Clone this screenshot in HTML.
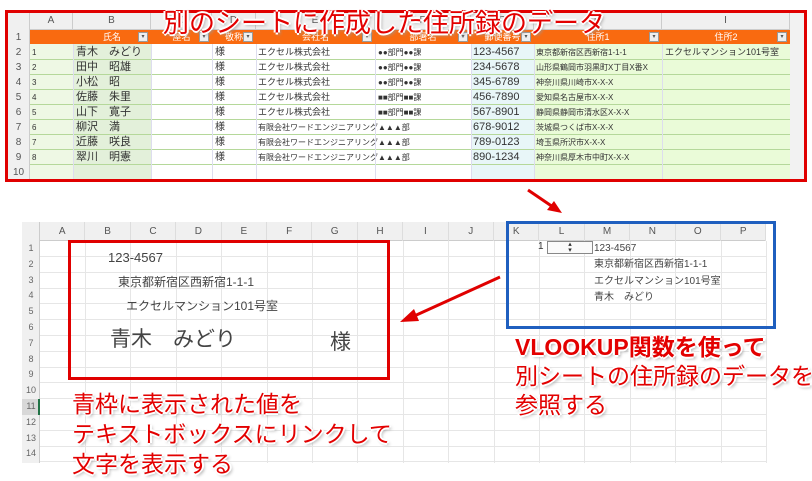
<!DOCTYPE html>
<html><head><meta charset="utf-8"><style>
*{margin:0;padding:0;box-sizing:border-box}
body{width:812px;height:481px;background:#fff;position:relative;overflow:hidden;font-family:"Liberation Sans","Noto Sans CJK JP",sans-serif;color:#333}
.a{position:absolute;white-space:nowrap}
.red{color:#e30000;font-weight:bold;text-shadow:-2px 0 #fff,2px 0 #fff,0 -2px #fff,0 2px #fff,2px 2px 3px #999}
</style></head><body>

<div class="a" style="left:5px;top:10px;width:802px;height:172px;background:#f2f2f2"></div>
<div class="a" style="left:30px;top:12px;width:760px;height:18px;background:#f0f0f0;border-bottom:1px solid #ccc"></div>
<div class="a" style="left:7px;top:12px;width:23px;height:168px;background:#f0f0f0;border-right:1px solid #ccc"></div>
<div class="a" style="left:30px;top:30px;width:760px;height:150px;background:#fff"></div>
<div class="a" style="left:30px;top:44px;width:43px;height:136px;background:#eef8e4"></div>
<div class="a" style="left:73px;top:44px;width:78px;height:136px;background:#e3f0da"></div>
<div class="a" style="left:471px;top:44px;width:63px;height:136px;background:#e8f6f8"></div>
<div class="a" style="left:534px;top:44px;width:256px;height:136px;background:#eafbd8"></div>
<div class="a" style="left:30px;top:30px;width:760px;height:14px;background:#f96a10"></div>
<div id="top"></div>
<div class="a" style="left:5px;top:10px;width:802px;height:172px;border:3px solid #e00000"></div>

<div class="a" style="left:22px;top:222px;width:744px;height:19px;background:#f0f0f0;border-bottom:1px solid #ccc"></div>
<div class="a" style="left:22px;top:222px;width:18px;height:241px;background:#f0f0f0;border-right:1px solid #ccc"></div>
<div class="a" style="left:22px;top:399px;width:18px;height:16px;background:#d8d8d8;border-right:2px solid #217346"></div>
<div id="bot"></div>

<div class="a" style="left:68px;top:240px;width:322px;height:140px;border:3px solid #e00000"></div>
<div class="a" style="left:108px;top:250px;font-size:13px;color:#444">123-4567</div>
<div class="a" style="left:118px;top:273px;font-size:12px;color:#444">東京都新宿区西新宿1-1-1</div>
<div class="a" style="left:126px;top:297px;font-size:12px;color:#444">エクセルマンション101号室</div>
<div class="a" style="left:110px;top:323px;font-size:21px;color:#444">青木　みどり</div>
<div class="a" style="left:330px;top:326px;font-size:21px;color:#444">様</div>

<div class="a" style="left:506px;top:221px;width:270px;height:108px;border:3px solid #1f5fbf"></div>
<div class="a" style="left:538px;top:241px;font-size:10px">1</div>
<div class="a" style="left:547px;top:241px;width:46px;height:13px;border:1px solid #888;background:#fafafa;font-size:7px;text-align:center;line-height:6px">▴<br>▾</div>
<div class="a" style="left:594px;top:241px;font-size:10px;color:#444;line-height:16.3px">123-4567<br>東京都新宿区西新宿1-1-1<br>エクセルマンション101号室<br>青木　みどり</div>

<svg class="a" style="left:0;top:0" width="812" height="481">
<line x1="528" y1="190" x2="553" y2="207" stroke="#e00000" stroke-width="3"/>
<polygon points="562,213 547,210 554,201" fill="#e00000"/>
<line x1="500" y1="277" x2="412" y2="317" stroke="#e00000" stroke-width="3"/>
<polygon points="400,322 414,309 419,321" fill="#e00000"/>
</svg>

<div class="a red" style="left:163px;top:3px;font-size:26px;font-weight:normal">別のシートに作成した住所録のデータ</div>
<div class="a red" style="left:72px;top:389px;font-size:23px;font-weight:normal;line-height:30px">青枠に表示された値を<br>テキストボックスにリンクして<br>文字を表示する</div>
<div class="a red" style="left:515px;top:333px;font-size:23px;line-height:29px">VLOOKUP関数を使って<br><span style="font-weight:normal">別シートの住所録のデータを<br>参照する</span></div>

<script>
var t=document.getElementById('top'),h='';
var cx=[30,73,151,212,256,375,471,534,662,790],L='ABCDEFGHI';
var hd=['','氏名','屋名','敬称','会社名','部署名','郵便番号','住所1','住所2'];
for(var i=0;i<9;i++){
h+='<div class="a" style="left:'+cx[i]+'px;top:12px;width:'+(cx[i+1]-cx[i])+'px;height:18px;border-right:1px solid #ccc;font-size:10px;text-align:center;line-height:18px;color:#555">'+L[i]+'</div>';
if(i>0)h+='<div class="a" style="left:'+cx[i]+'px;top:30px;width:'+(cx[i+1]-cx[i])+'px;height:14px;font-size:9px;text-align:center;line-height:14px;color:#fff">'+hd[i]+'<span style="position:absolute;right:3px;top:2px;width:10px;height:10px;background:#eee;border:1px solid #999;color:#555;font-size:6px;line-height:9px">▾</span></div>';
}
var rows=[['青木　みどり','エクセル株式会社','●●部門●●課','123-4567','東京都新宿区西新宿1-1-1','エクセルマンション101号室'],
['田中　昭雄','エクセル株式会社','●●部門●●課','234-5678','山形県鶴岡市羽黒町X丁目X番X',''],
['小松　昭','エクセル株式会社','●●部門●●課','345-6789','神奈川県川崎市X-X-X',''],
['佐藤　朱里','エクセル株式会社','■■部門■■課','456-7890','愛知県名古屋市X-X-X',''],
['山下　寛子','エクセル株式会社','■■部門■■課','567-8901','静岡県静岡市清水区X-X-X',''],
['柳沢　満','有限会社ワードエンジニアリング','▲▲▲部','678-9012','茨城県つくば市X-X-X',''],
['近藤　咲良','有限会社ワードエンジニアリング','▲▲▲部','789-0123','埼玉県所沢市X-X-X',''],
['翠川　明憲','有限会社ワードエンジニアリング','▲▲▲部','890-1234','神奈川県厚木市中町X-X-X','']];
for(var r=0;r<10;r++){
var y=30+r*15;
h+='<div class="a" style="left:7px;top:'+y+'px;width:23px;height:15px;font-size:10px;text-align:center;line-height:15px;color:#555">'+(r+1)+'</div>';
if(r>0)h+='<div class="a" style="left:30px;top:'+(y+14)+'px;width:760px;height:1px;background:#b5d89a"></div>';
if(r>=1&&r<=8){var d=rows[r-1];
var c=function(x,s,fs){h+='<div class="a" style="left:'+x+'px;top:'+y+'px;font-size:'+fs+'px;line-height:15px;color:#333">'+s+'</div>';};
c(32,r,8);c(76,d[0],11);c(215,'様',10);c(258,d[1],r>5?8:9);c(378,d[2],8);c(473,d[3],11);c(536,d[4],8);c(665,d[5],9);}
}
for(var i=1;i<9;i++)h+='<div class="a" style="left:'+cx[i]+'px;top:44px;width:1px;height:136px;background:#dde"></div>';
t.innerHTML=h;

var b=document.getElementById('bot');h='';
var cl='ABCDEFGHIJKLMNOP';
for(var i=0;i<16;i++){var x=40+i*45.4;
h+='<div class="a" style="left:'+x+'px;top:222px;width:45.4px;height:19px;border-right:1px solid #ddd;font-size:10px;text-align:center;line-height:19px;color:#555">'+cl[i]+'</div>';
h+='<div class="a" style="left:'+(x+45)+'px;top:241px;width:1px;height:222px;background:#e6e6e6"></div>';}
for(var r=0;r<14;r++){var y=241+r*15.8;
h+='<div class="a" style="left:22px;top:'+y+'px;width:18px;height:15.8px;font-size:9px;text-align:center;line-height:15.8px;color:#666">'+(r+1)+'</div>';
h+='<div class="a" style="left:40px;top:'+(y+15)+'px;width:726px;height:1px;background:#e6e6e6"></div>';}
b.innerHTML=h;
</script>
</body></html>
